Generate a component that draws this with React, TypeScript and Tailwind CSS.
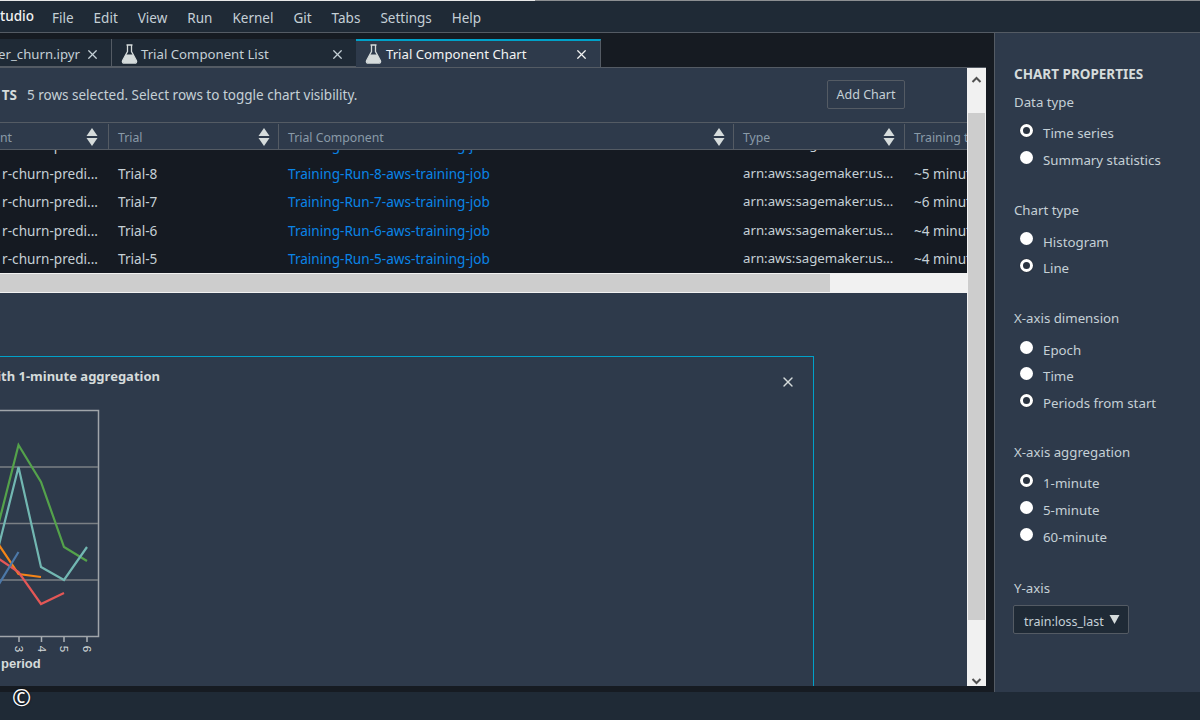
import type { ReactNode } from "react";
import { X } from "lucide-react";

const menus = ["File", "Edit", "View", "Run", "Kernel", "Git", "Tabs", "Settings", "Help"];
const rows = ["9", "8", "7", "6", "5"];

function Flask() {
  return (
    <svg className="h-[20px] w-[17px] shrink-0" viewBox="0 0 17 20" fill="none">
      <path d="M5.5 1h6M6.5 1v6.5L1.6 16.5c-.7 1.3.2 2.7 1.6 2.7h10.6c1.4 0 2.300-1.400 1.600-2.700L10.500 7.500V1" stroke="#d5dbdb" strokeWidth="1.3" />
      <path d="M4.800 10.500h7.400l3 6c.6 1.200-.2 2.500-1.500 2.500H3.300c-1.300 0-2.100-1.300-1.500-2.500z" fill="#d5dbdb" />
    </svg>
  );
}

function Sort() {
  return (
    <svg className="h-[18px] w-[12px] shrink-0" viewBox="0 0 12 18" fill="#d5dbdb">
      <path d="M6 0l5.500 8H.5z" />
      <path d="M6 18L.5 10h11z" />
    </svg>
  );
}

function Radio({ label, checked }: { label: string; checked?: boolean }) {
  return (
    <div className="flex h-[26.6px] items-center pl-[6px]">
      <span
        className={
          checked
            ? "-mt-[7px] mr-[10px] size-[13px] shrink-0 rounded-full border-[3px] border-white bg-[#2a3340] shadow-[0_0_1px_#000]"
            : "-mt-[7px] mr-[10px] size-[13px] shrink-0 rounded-full bg-white"
        }
      />
      <span className="text-[13.3px] text-[#c5d0d6]">{label}</span>
    </div>
  );
}

function Group({ title, className, children }: { title: string; className: string; children: ReactNode }) {
  return (
    <div className={className}>
      <div className="mb-[9px] h-[20px] text-[13.25px] leading-[20px] text-[#c5d0d6]">{title}</div>
      {children}
    </div>
  );
}

function TrialChart() {
  return (
    <svg className="mt-[14px] h-[272px] w-[110px]" viewBox="0 404 110 272" fill="none" strokeWidth="1.5">
      <path d="M-2 410.500H98.500V636.500H-2" stroke="#a0a5aa" />
      <path d="M-2 467H98M-2 523.500H98M-2 580H98" stroke="#7b8085" />
      <path d="M19 637v5M41.500 637v5M64 637v5M87 637v5" stroke="#aab0b5" />
      <path d="M-1 522L18.500 445L41 482L64 547L87 561" stroke="#54a24b" strokeWidth="2.2" />
      <path d="M-1 545L18.500 467L41 567L64 580L87 547" stroke="#72b7b2" strokeWidth="2.2" />
      <path d="M-1 545L18.500 574L41 577" stroke="#f58518" strokeWidth="2.2" />
      <path d="M-1 559L18.500 572L41 604L64 593" stroke="#e45756" strokeWidth="2.2" />
      <path d="M-1 584L18.500 552" stroke="#4c78a8" strokeWidth="2.2" />
      <g fill="#d5dbdb" fontFamily="Liberation Sans, sans-serif" fontSize="11.500" textAnchor="middle">
        <text transform="translate(15 649) rotate(90)">3</text>
        <text transform="translate(37.500 649) rotate(90)">4</text>
        <text transform="translate(60 649) rotate(90)">5</text>
        <text transform="translate(83 649) rotate(90)">6</text>
      </g>
      <text x="1" y="667.500" fill="#d5dbdb" fontFamily="Liberation Sans, sans-serif" fontSize="13" fontWeight="700">period</text>
    </svg>
  );
}

export default function App() {
  return (
    <div className="relative h-[720px] w-[1200px] overflow-hidden bg-[#1f2a36] font-['Noto_Sans',sans-serif]">
      <div className="flex h-[1px]">
        <div className="w-[535px] bg-[#e8e8e8]" />
        <div className="flex-1 bg-[#8c8f92]" />
      </div>

      <div className="flex h-[32px] items-center border-b border-[#545b64] bg-[#1f2a36] text-[13.5px] text-[#c5d0d6]">
        <div className="w-[52px] shrink-0 text-right">
          <span className="mr-[19px] font-medium text-[#f2f3f3]">tudio</span>
        </div>
        <div className="flex gap-[20px] pt-[3px]">
          {menus.map((menu) => (
            <span key={menu}>{menu}</span>
          ))}
        </div>
      </div>

      <div className="flex h-[659px]">
        <div className="flex w-[994px] shrink-0 flex-col bg-[#161b22] pt-[6px]">
          <div className="flex h-[28px] text-[13.2px] text-[#c5d0d6]">
            <div className="flex w-[112px] shrink-0 items-center justify-end border-r border-b border-[#545b64] bg-[#1f2a36] pt-[3px] pr-[11px]">
              <span className="mr-[5px] pt-[2px] whitespace-nowrap">er_churn.ipyr</span>
              <X className="size-[15px] shrink-0" />
            </div>
            <div className="flex w-[244px] shrink-0 items-center border-b border-[#545b64] bg-[#1f2a36] pt-[3px] pr-[11px] pl-[9px]">
              <Flask />
              <span className="ml-[3px] flex-1 pt-[2px]">Trial Component List</span>
              <X className="size-[15px] shrink-0" />
            </div>
            <div className="flex w-[245px] shrink-0 items-center border-t-2 border-r border-t-[#00a1c9] border-r-[#545b64] bg-[#2e3a4b] pr-[11px] pl-[9px] text-[#f2f3f3]">
              <Flask />
              <span className="ml-[4px] flex-1 pt-[2px]">Trial Component Chart</span>
              <X className="size-[15px] shrink-0" />
            </div>
          </div>

          <div className="mr-[8px] flex h-[619px] border-t border-[#545b64] bg-[#2e3a4b]">
            <div className="flex w-[967px] min-w-0 shrink-0 flex-col">
              <div className="flex h-[54px] shrink-0 items-center pt-[1px] pr-[62px] text-[13.5px] text-[#c5d0d6]">
                <span className="w-[27px] shrink-0 pr-[10px] text-right font-bold text-[#d5dbdb]">TS</span>
                <span className="flex-1">5 rows selected. Select rows to toggle chart visibility.</span>
                <button className="-mt-[2px] h-[29px] w-[78px] rounded-[2px] border border-[#545b64] pt-[2px] text-[12.5px]">Add Chart</button>
              </div>

              <div className="flex h-[28px] shrink-0 overflow-hidden border-y border-[#545b64] pt-[1px] text-[12.25px] whitespace-nowrap text-[#8a9ba8]">
                <div className="flex w-[109px] shrink-0 items-center justify-between border-r border-[#545b64] pr-[10px]">
                  <span className="pt-[4px]">nt</span>
                  <Sort />
                </div>
                <div className="flex w-[170px] shrink-0 items-center justify-between border-r border-[#545b64] pr-[8px] pl-[9px]">
                  <span className="pt-[4px]">Trial</span>
                  <Sort />
                </div>
                <div className="flex w-[455px] shrink-0 items-center justify-between border-r border-[#545b64] pr-[8px] pl-[9px]">
                  <span className="pt-[4px]">Trial Component</span>
                  <Sort />
                </div>
                <div className="flex w-[171px] shrink-0 items-center justify-between border-r border-[#545b64] pr-[9px] pl-[9px]">
                  <span className="pt-[4px]">Type</span>
                  <Sort />
                </div>
                <div className="flex shrink-0 items-center pl-[9px]">
                  <span className="pt-[4px]">Training time</span>
                </div>
              </div>

              <div className="h-[123px] shrink-0 overflow-hidden bg-[#151a22] text-[13.6px] whitespace-nowrap text-[#c5d0d6]">
                <div className="-mt-[19px]">
                  {rows.map((row) => (
                    <div className="flex h-[28.5px] items-center" key={row}>
                      <div className="w-[118px] shrink-0 pr-[20px] text-right">r-churn-predi...</div>
                      <div className="w-[170px] shrink-0">Trial-{row}</div>
                      <div className="w-[455px] shrink-0 text-[#0a84e6]">Training-Run-{row}-aws-training-job</div>
                      <div className="w-[171px] shrink-0 text-[13.25px]">arn:aws:sagemaker:us...</div>
                      <div className="shrink-0">~{row === "8" || row === "9" ? "5" : row === "7" ? "6" : "4"} minutes</div>
                    </div>
                  ))}
                </div>
              </div>

              <div className="flex h-[20px] shrink-0 border-y border-[#f2f2f2] bg-[#f1f1f1]">
                <div className="w-[830px] bg-[#cdcdcd]" />
              </div>

              <div className="min-h-0 flex-1 overflow-hidden pt-[63px]">
                <div className="h-[400px] w-[814px] border-t border-r border-[#00a1c9]">
                  <div className="flex items-start pt-[10px] pr-[17px]">
                    <div className="flex w-[160px] justify-end text-[13px] font-bold whitespace-nowrap text-[#d5dbdb]">
                      <span>Time series with 1-minute aggregation</span>
                    </div>
                    <span className="flex-1" />
                    <X className="mt-[7px] size-[16px] text-[#d5dbdb]" />
                  </div>
                  <TrialChart />
                </div>
              </div>
            </div>

            <div className="flex w-[19px] shrink-0 flex-col border-x border-[#f2f2f2] bg-[#f1f1f1]">
              <svg className="mt-[4px] h-[16px] w-full" viewBox="0 0 17 16" fill="none" stroke="#505050" strokeWidth="2">
                <path d="M4.500 10l4-4 4 4" />
              </svg>
              <div className="mt-[25px] h-[507px] bg-[#cdcdcd]" />
              <span className="flex-1" />
              <svg className="h-[10px] w-full" viewBox="0 0 17 10" fill="none" stroke="#505050" strokeWidth="2">
                <path d="M4.500 3l4 4 4-4" />
              </svg>
            </div>
          </div>
        </div>

        <div className="w-[206px] shrink-0 border-l border-[#545b64] bg-[#2e3a4b] pl-[19px]">
          <div className="mt-[31px] h-[20px] text-[13.5px] leading-[20px] font-bold text-[#d5dbdb]">CHART PROPERTIES</div>
          <Group title="Data type" className="mt-[8px]">
            <Radio label="Time series" checked />
            <Radio label="Summary statistics" />
          </Group>
          <Group title="Chart type" className="mt-[26px]">
            <Radio label="Histogram" />
            <Radio label="Line" checked />
          </Group>
          <Group title="X-axis dimension" className="mt-[26px]">
            <Radio label="Epoch" />
            <Radio label="Time" />
            <Radio label="Periods from start" checked />
          </Group>
          <Group title="X-axis aggregation" className="mt-[25px]">
            <Radio label="1-minute" checked />
            <Radio label="5-minute" />
            <Radio label="60-minute" />
          </Group>
          <div className="mt-[27px] h-[20px] text-[13.25px] leading-[20px] text-[#c5d0d6]">Y-axis</div>
          <div className="mt-[7px] -ml-[1px] flex h-[29px] w-[116px] items-center rounded-[2px] border border-[#545b64] bg-[#1f2a36] pt-[6px] pl-[10px] text-[12.5px] text-[#c5d0d6]">
            <span>train:loss_last</span>
            <svg className="-mt-[5px] ml-[5px] h-[9px] w-[11px]" viewBox="0 0 11 9" fill="#d5dbdb">
              <path d="M.5 0h10L5.500 9z" />
            </svg>
          </div>
        </div>
      </div>

      <span className="absolute top-[680px] left-[12px] text-[23px] text-white [text-shadow:0_0_2px_#000]">©</span>
    </div>
  );
}
